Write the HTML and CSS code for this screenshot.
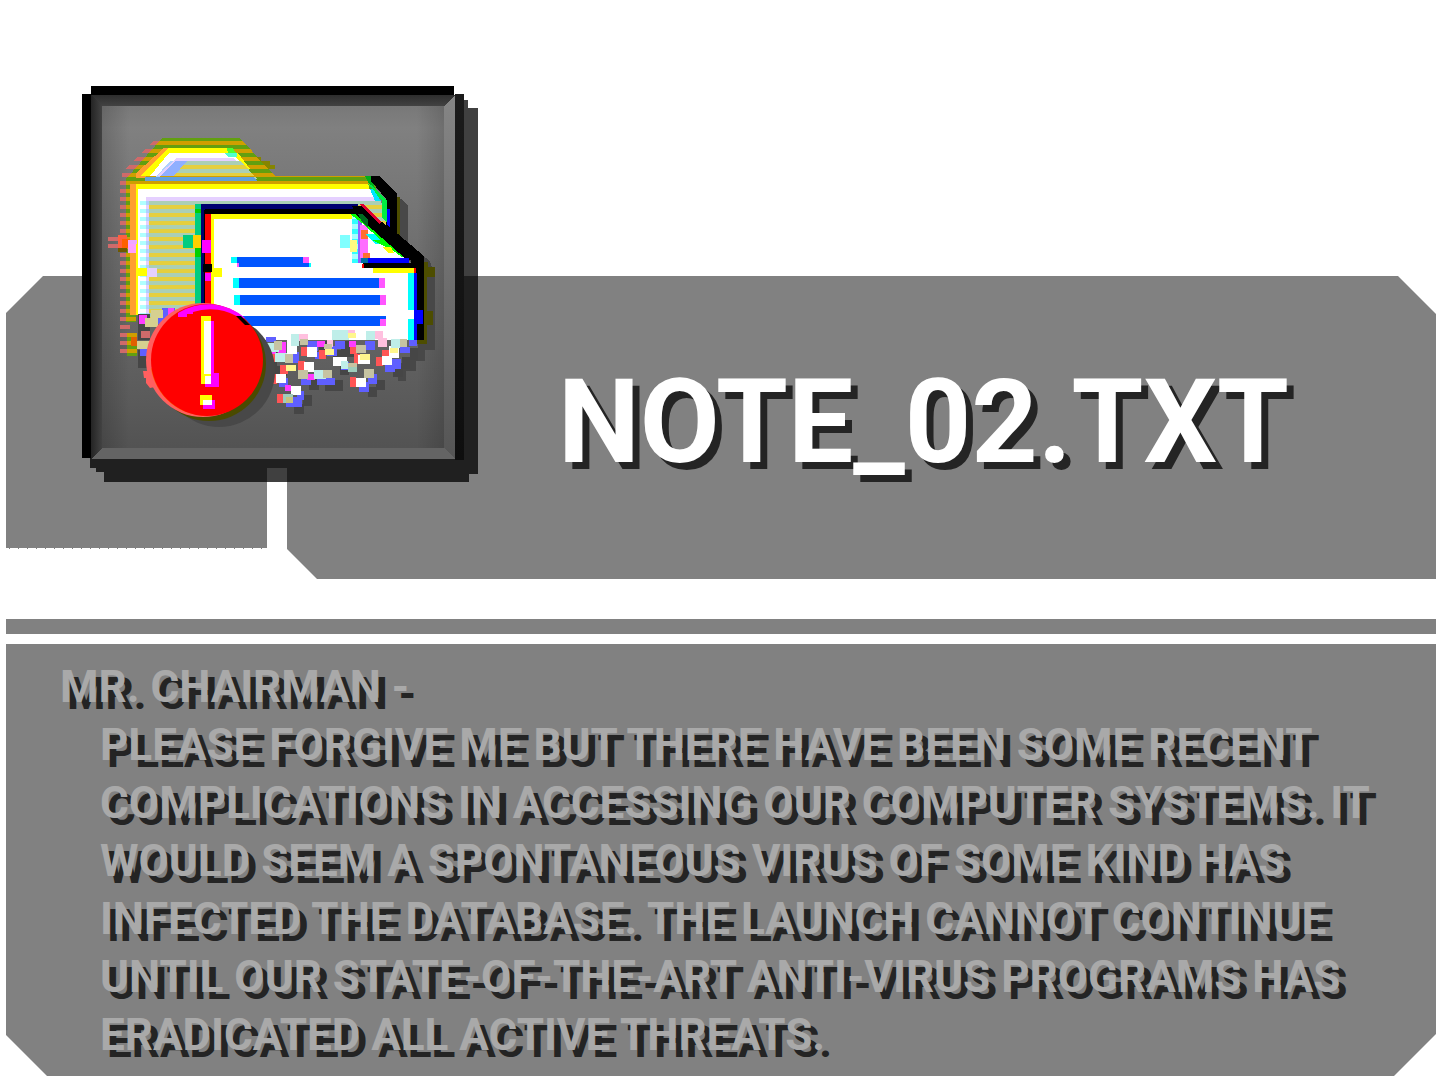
FILE: index.html
```html
<!DOCTYPE html>
<html lang="en">
<head>
<meta charset="utf-8">
<meta name="viewport" content="width=device-width, initial-scale=1">
<title>NOTE_02.TXT</title>
<link rel="stylesheet" href="styles.css">
</head>
<body>
<main class="note">
  <header class="banner">
    <div class="banner-panel"></div>
    <div class="banner-content">
      <svg class="file-icon" viewBox="82 86 396 396" role="img" aria-label="Corrupted text file" shape-rendering="crispEdges">
        <defs>
          <linearGradient id="face" x1="0" y1="0" x2="0" y2="1"><stop offset="0" stop-color="#747474"/><stop offset=".09" stop-color="#808080"/><stop offset=".5" stop-color="#6b6b6b"/><stop offset=".85" stop-color="#5a5a5a"/><stop offset="1" stop-color="#515151"/></linearGradient>
          <linearGradient id="sides"><stop offset="0" stop-color="#000" stop-opacity=".16"/><stop offset=".08" stop-color="#000" stop-opacity="0"/><stop offset=".92" stop-color="#000" stop-opacity="0"/><stop offset="1" stop-color="#000" stop-opacity=".14"/></linearGradient>
          <linearGradient id="topBevel" x1="0" y1="0" x2="0" y2="1"><stop offset="0" stop-color="#2d2d2d"/><stop offset="1" stop-color="#424242"/></linearGradient>
          <linearGradient id="leftBevel"><stop offset="0" stop-color="#242424"/><stop offset="1" stop-color="#424242"/></linearGradient>
          <linearGradient id="rightBevel" x1="0" y1="0" x2="0" y2="1"><stop offset="0" stop-color="#858585"/><stop offset=".5" stop-color="#6e6e6e"/><stop offset="1" stop-color="#555"/></linearGradient>
          <linearGradient id="rightEdge" x1="0" y1="0" x2="0" y2="1"><stop offset="0" stop-color="#1b1b1b"/><stop offset="1" stop-color="#0e0e0e"/></linearGradient>
          <pattern id="paper" width="8" height="8" y="1" patternUnits="userSpaceOnUse"><path fill="#abcfb5" d="M0 0h8v8H0z"/><path fill="#e5cf3f" d="M0 4h8v4H0z"/></pattern>
          <pattern id="rim" width="8" height="8" y="1" patternUnits="userSpaceOnUse"><path fill="#cf9f00" d="M0 0h8v8H0z"/><path fill="#629f10" d="M0 0h8v4H0z"/></pattern>
          <pattern id="fringe" width="8" height="8" y="5" patternUnits="userSpaceOnUse"><path fill="#cf6a6a" d="M0 0h8v4H0z"/></pattern>
          <pattern id="glow" width="8" height="8" y="1" patternUnits="userSpaceOnUse"><path fill="#fff" d="M0 0h8v8H0z"/><path fill="#b0ffff" d="M0 0h8v4H0z"/></pattern>
          <pattern id="lilac" width="8" height="8" y="1" patternUnits="userSpaceOnUse"><path fill="#e5d0ff" d="M0 0h8v8H0z"/><path fill="#b0d0ff" d="M0 0h8v4H0z"/></pattern>
          <pattern id="scan" width="8" height="10" y="219" patternUnits="userSpaceOnUse"><path fill="#30ffff" d="M0 0h8v5H0z"/><path fill="#a5ffff" d="M0 5h8v5H0z"/></pattern>
        </defs>
        <!-- Tile shadow and frame -->
        <path fill-opacity=".75" d="M90 458h365v-358h13v8h10v366h-9v8H104v-10h-8v-4h-6z"/>
        <path d="M91 86h363v9H91zM82 94h9v364h-9z"/>
        <path fill="url(#rightEdge)" d="M455 94h9v366h-9z"/>
        <path fill="url(#face)" d="M91 95h364v364H91z"/>
        <path fill="url(#sides)" d="M102 106h342v342H102z"/>
        <path fill="url(#topBevel)" d="M91 95h364l-11 11H102z"/>
        <path fill="url(#leftBevel)" d="M91 95l11 11v342l-11 11z"/>
        <path fill="url(#rightBevel)" d="M455 95l-11 11v342l11 11z"/>
        <path fill="#646464" d="M102 448h342l11 11H91z"/>
        <!-- Shadow under folder and page -->
        <path fill="#484848" d="M388 191l16 10 4 5v38l22 17 5 15v74h-10v11h-9v10h-10v10h-8v-16l20-12V270l-25-27z"/>
        <path fill="#4d4d00" d="M397 197h3v40l-3-3zM424 262h4v5h7v10h-8v34h6v14h-6v19h-10v-20h7z"/>
        <!-- Folder tab -->
        <path fill="url(#fringe)" d="M156 138h10l-32 43h-12v-8z"/>
        <path fill="url(#rim)" d="M162 138h78l36 39v7H126v-5z"/>
        <path fill="#858500" d="M257 157h4v4h9v4h5v4h-7z"/>
        <path fill="#ff9f30" d="M164 148h8l-27 30h-9v-5z"/>
        <path fill="#ff0" d="M168 148h64v5h6l12 16-100 7h-9z"/>
        <path fill="#fff" d="M169 153h64l6 8-76 15h-13z"/>
        <path fill="#b0d0ff" d="M170 161h18l-15 17h-18z"/>
        <path fill="#e5d0ff" d="M177 158h57l8 9-74 9h-11z"/>
        <path fill="url(#paper)" d="M181 161h60l16 18h-91z"/>
        <path fill="#90afff" d="M175 161h12l-14 16h-13z"/>
        <path fill="#4dff30" d="M227 148h6l3 5h-8z"/><path fill="#50ffd0" d="M225 153h12v4h-9z"/>
        <path fill="#61a0dc" d="M145 177h108l6 5H145z"/>
        <!-- Folder body and its offset colour channels -->
        <path fill="url(#fringe)" d="M120 180h10v177h-10z"/>
        <path fill="url(#rim)" d="M126 181h250v20H126zM126 184h10v138h-10zM127 333h10v23h-10z"/>
        <path fill="#cf9f00" d="M160 176h205v1H160z"/><path fill="#629f10" d="M259 177h111v4H259z"/><path fill="#cf9f00" d="M130 181h236v3H130z"/>
        <path fill="#ff9f2f" d="M130 184h7v131h-7z"/>
        <path fill="#ff0" d="M136 184h233v6H136zM136 184h4v131h-4z"/>
        <path fill="#fff" d="M138 189h236v8H138zM138 189h4v126h-4z"/>
        <path fill="url(#glow)" d="M140 197h6v118h-6z"/>
        <path fill="#e5d0ff" d="M146 197h231v5H146z"/>
        <path fill="url(#lilac)" d="M146 201h4v114h-4z"/>
        <path fill="url(#paper)" d="M149 201h232l6 22-6 15-160-20v100h-72z"/>
        <path fill="#00b01a" d="M365 176h6l4 12-6-4z"/>
        <path fill="#000" d="M371 176h9l17 18v45l-11-8v-32l-15-18z"/>
        <path fill="#00ed42" d="M367 184l4 1 16 16v22l-5-5v-17l-10-12z"/>
        <path fill="#00e5ff" d="M370 189h3l8 12h-6z"/>
        <!-- Displaced scan blocks -->
        <path fill="#cf6a6a" d="M108 237h10v4h-10zM108 244h10v4h-10z"/>
        <path fill="#ff6040" d="M118 235h9v13h-9z"/><path fill="#6e5900" d="M118 248h9v4h-9z"/>
        <path fill="#ff6000" d="M122 239h8v9h-8z"/><path fill="#ff9fff" d="M128 241h8v12h-8z"/><path fill="#efa8ff" d="M128 240h9v4h-9z"/>
        <path fill="#ff0" d="M138 268h9v8h-9z"/><path fill="#e5d0ff" d="M147 268h10v9h-10z"/>
        <!-- Page -->
        <path fill="#00cc80" d="M195 204h7v100h-7zM183 235h12v13h-12z"/>
        <path fill="#00d000" d="M195 209h6v4h-6zM195 248h6v9h-6z"/><path fill="#ffd000" d="M193 235h8v13h-8z"/>
        <path fill="#00006b" d="M201 204h4v100h-4z"/><path d="M204 209h3v95h-3z"/>
        <path fill="#f00" d="M205 214h6v99h-6z"/><path fill="#ff0" d="M211 214h141v5H214v90h-3z"/>
        <path fill="#fff" d="M214 219h142l8 45 50 9v67H250l-36-30z"/>
        <path fill="#f0f" d="M202 240h9v13h-9zM205 273h6v8h-6z"/><path d="M203 264h9v8h-9z"/><path fill="#ff0" d="M213 268h9v9h-9z"/>
        <path fill="#000070" d="M201 204h157v6H201z"/><path d="M205 209h156v5H205z"/>
        <path fill="#fff" d="M358 219h6l44 38v4h-50z"/>
        <path fill="url(#scan)" d="M352 214h6v49h-6z"/><path fill="#80ffff" d="M340 235h10v13h-10z"/><path fill="#fffc80" d="M350 240h7v12h-7z"/>
        <path fill="#9060ff" d="M358 220h4v43h-4z"/><path fill="#ff6dff" d="M360 225h8v33h-8z"/><path fill="#ff6e30" d="M361 230h7v9h-7zM363 253h7v5h-7z"/>
        <path fill="#0ff" d="M365 234h12l10 10h-12z"/>
        <path fill="#0f0" d="M350 214h10l45 43h-3l-10-7-20-10h9l-19-17z"/><path fill="#ff0" d="M382 247h9l3 6h-6z"/>
        <path fill="#000" d="M352 206h9l29 22 8 6 26 22v84h-7v-67h-3v-5h-51v-5h48v-3h-4l-42-37-10-9z"/>
        <path fill="#006b20" d="M358 214h4l6 6v7l-6-5z"/>
        <path fill="#e00030" d="M359 204h4l18 18-2 2z"/>
        <path fill="#00f" d="M368 258h41v5h-41zM414 273h3v67h-3zM414 310h9v14h-9zM387 209h3v18l-3-2z"/>
        <path fill="#0073a5" d="M361 258h7v5h-7z"/>
        <path fill="#ff0" d="M373 268h41v5h-41z"/><path fill="#f00" d="M414 268h2v5h-2zM362 264h2v4h-2z"/>
        <path fill="#0ff" d="M408 273h6v37h-6zM408 319h6v21h-6z"/><path fill="#fff" d="M408 310h6v9h-6z"/>
        <!-- Text lines on the page -->
        <path fill="#05f" d="M237 257h72v10h-72zM239 278h140v10H239zM240 295h140v10H240zM232 316h154v10H232z"/>
        <path fill="#0ff" d="M231 257h6v6h-6zM233 278h6v10h-6zM234 295h6v10h-6zM309 263h2v4h-2z"/>
        <path fill="#ff55ff" d="M303 257h6v6h-6zM237 263h2v4h-2zM379 278h6v10h-6zM380 295h6v10h-6zM380 319h6v7h-6z"/>
        <!-- Dissolving bottom edge -->
        <path fill="#464646" d="M267 350h10v26h-10zM277 366h10v10h-10zM309 378h10v12h-10zM325 380h18v11h-18zM294 404h10v10h-10zM303 395h9v11h-9zM333 350h12v11h-12zM340 366h9v9h-9zM368 387h9v10h-9zM376 380h9v10h-9zM393 366h10v11h-10zM402 357h8v12h-8zM410 348h8v12h-8zM319 341h14v9h-14zM341 341h14v16h-14zM138 314h12v26h-12zM138 350h10v18h-10z"/>
        <path fill="#5f5fff" d="M266 337h10v5h-10zM289 352h10v11h-10zM307 341h11v10h-11zM315 352h7v7h-7zM327 346h10v10h-10zM335 341h10v8h-10zM341 362h8v8h-8zM317 378h18v7h-18zM301 376h10v9h-10zM292 397h10v10h-10zM297 391h7v9h-7zM279 378h9v9h-9zM286 400h9v7h-9zM359 382h10v10h-10zM368 374h9v10h-9zM385 365h10v7h-10zM391 359h10v10h-10zM400 347h10v6h-10zM365 341h10v9h-10zM409 340h8v6h-8zM155 315h14v9h-14zM162 308h13v9h-13zM140 349h9v7h-9z"/>
        <path fill="#ff5555" d="M270 354h8v8h-8zM270 374h7v10h-7zM280 365h8v9h-8zM298 361h7v9h-7zM301 347h8v9h-8zM319 350h7v9h-7zM350 347h7v7h-7zM354 354h7v10h-7zM350 377h6v10h-6zM376 357h7v9h-7zM382 350h7v8h-7zM277 394h7v9h-7z"/>
        <path fill="#ff3cff" d="M278 342h8v12h-8zM317 341h8v6h-8zM307 374h8v6h-8zM333 357h7v8h-7zM349 341h7v6h-7zM285 385h6v6h-6zM270 349h6v5h-6zM139 315h8v9h-8zM168 308h6v7h-6z"/>
        <path fill="#fff" d="M276 374h10v9h-10zM287 340h10v14h-10zM307 347h10v10h-10zM304 362h10v10h-10zM333 357h14v9h-14zM358 355h12v9h-12zM356 378h10v9h-10zM382 356h10v9h-10zM389 346h10v12h-10zM291 386h10v9h-10z"/>
        <path fill="#bfeee9" d="M266 343h13v9h-13zM291 334h8v12h-8zM275 353h12v9h-12zM314 370h12v9h-12zM332 330h17v10h-17zM366 331h9v9h-9zM391 339h9v9h-9zM341 361h7v8h-7z"/>
        <path fill="#ffc0df" d="M299 334h9v7h-9zM327 340h6v7h-6zM348 330h7v8h-7zM375 331h8v8h-8zM378 338h9v9h-9z"/>
        <path fill="#c6c3a2" d="M274 341h8v9h-8zM300 339h8v6h-8zM285 354h8v9h-8zM298 370h10v9h-10zM323 370h9v8h-9zM324 344h8v5h-8zM348 363h9v9h-9zM364 369h10v9h-10zM356 345h10v8h-10zM400 339h7v8h-7z"/>
        <path fill="#9fcdbb" d="M283 394h10v9h-10zM348 367h9v5h-9z"/><path fill="#c6c380" d="M286 397h7v6h-7z"/>
        <path fill="#fff68c" d="M286 365h10v6h-10zM325 349h9v6h-9zM348 333h8v5h-8zM360 354h10v6h-10zM390 348h8v5h-8z"/>
        <path fill="#d6d090" d="M145 318h13v9h-13zM151 310h12v8h-12zM137 341h19v8h-19z"/><path fill="#cf6a6a" d="M141 331h9v7h-9z"/><path fill="#e06000" d="M131 337h6v9h-6z"/>
        <!-- Alert badge -->
        <g shape-rendering="auto">
          <circle cx="219" cy="371" r="56" fill="#484848"/><circle cx="209" cy="364" r="57" fill="#4a4a00"/>
          <circle cx="203" cy="360" r="57" fill="#ff5f5f"/>
          <path fill="#ff5f5f" d="M143 371h6l6 16-5 1-4-5v-5h-2z"/>
          <path fill="#ff6000" d="M151 368a56 56 0 0 0 56 48l4-4z"/>
          <circle cx="207" cy="360" r="56" fill="red"/>
          <path fill="#f0f" d="M178 317v-4a56 56 0 0 1 67 5l-4 1a54 54 0 0 0-48-7v2h-6v3z"/>
          <path d="M236 316h5l9 9h-5z"/>
        </g>
        <path fill="#ff0" d="M201 316h10v68h-10zM200 395h12v10h-12z"/>
        <path fill="#f0f" d="M211 321h3v52h5v14h-14v-3h6zM203 405h9v-5h3v9h-12z"/>
        <path fill="#fff" d="M204 321h7v53h-7zM205 376h6v8h-6zM203 400h9v5h-9z"/>
      </svg>
      <h1 class="file-name">NOTE_02.TXT</h1>
    </div>
  </header>
  <div class="rule"></div>
  <article class="message">
    <p class="salutation">MR. CHAIRMAN -</p>
    <p class="body-text">PLEASE FORGIVE ME BUT THERE HAVE BEEN SOME RECENT<br>COMPLICATIONS IN ACCESSING OUR COMPUTER SYSTEMS. IT<br>WOULD SEEM A SPONTANEOUS VIRUS OF SOME KIND HAS<br>INFECTED THE DATABASE. THE LAUNCH CANNOT CONTINUE<br>UNTIL OUR STATE-OF-THE-ART ANTI-VIRUS PROGRAMS HAS<br>ERADICATED ALL ACTIVE THREATS.</p>
  </article>
</main>
</body>
</html>
```

FILE: styles.css
```css
* { box-sizing: border-box; }
body { margin: 0; background: #fff; }

.note {
  padding: 86px 4px 4px 6px;
  font-family: Roboto, "Liberation Sans", sans-serif;
  font-weight: 700;
}

.banner { display: grid; }
.banner-panel {
  grid-area: 1 / 1;
  margin-top: 190px;
  background: repeating-linear-gradient(to right, #fff 0 3px, #818181 3px 4px, #fff 4px 9px) 0 272px / 261px 1px no-repeat #818181;
  clip-path: polygon(0 37px, 37px 0, calc(100% - 38px) 0, 100% 38px, 100% 100%, 311px 100%, 281px 273px, 281px 192px, 261px 192px, 261px 273px, 0 273px);
}
.banner-content {
  grid-area: 1 / 1;
  z-index: 1;
  display: flex;
  align-items: flex-start;
  gap: 80px;
  padding: 0 76px 97px;
}
.file-icon { flex: none; width: 396px; height: 396px; }
.file-name {
  margin: 276px 0 0;
  font-size: 116px;
  line-height: 120px;
  color: #fff;
  text-shadow: 7px 7px #242424;
}

.rule { height: 15px; margin: 40px 0 10px; background: #818181; }

.message {
  padding: 14px 54px 12px;
  background: #818181;
  clip-path: polygon(0 0, 100% 0, 100% calc(100% - 42px), calc(100% - 42px) 100%, 41px 100%, 0 calc(100% - 41px));
  font-size: 44px;
  line-height: 58px;
  color: #a9a9a9;
  text-shadow: 7px 7px #242424;
}
.salutation, .body-text { margin: 0; }
.body-text { padding-left: 40px; }
```
